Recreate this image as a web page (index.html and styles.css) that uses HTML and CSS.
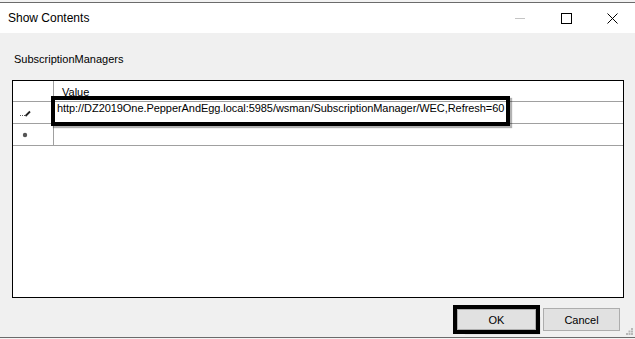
FILE: index.html
```html
<!DOCTYPE html>
<html lang="en">
<head>
    <meta charset="UTF-8">
    <meta name="viewport" content="width=device-width, initial-scale=1.0">
    <link rel="stylesheet" href="styles.css">
</head>
<body>
    <div class="window">
        <div class="top-edge"></div>

        <div class="titlebar">
            <span class="title">Show Contents</span>
            <div class="controls">
                <span class="ctl">
                    <svg width="10" height="10" viewBox="0 0 10 10"><line x1="0" y1="5.5" x2="10" y2="5.5" stroke="#c4c4c4" stroke-width="1"/></svg>
                </span>
                <span class="ctl">
                    <svg width="11" height="11" viewBox="0 0 11 11"><rect x="0.5" y="0.5" width="10" height="10" fill="none" stroke="#000" stroke-width="1"/></svg>
                </span>
                <span class="ctl">
                    <svg width="11" height="11" viewBox="0 0 11 11"><path d="M0.5 0.5 L10.5 10.5 M10.5 0.5 L0.5 10.5" stroke="#000" stroke-width="1"/></svg>
                </span>
            </div>
        </div>

        <div class="body">
            <div class="label">SubscriptionManagers</div>

            <div class="grid">
                <div class="grid-row header">
                    <div class="row-head"></div>
                    <div class="cell head-cell">Value</div>
                </div>
                <div class="grid-row">
                    <div class="row-head">
                        <svg class="pencil" width="12" height="8" viewBox="0 0 12 8">
                            <rect x="1" y="6" width="1" height="1" fill="#555"/>
                            <rect x="3" y="6" width="1" height="1" fill="#555"/>
                            <rect x="5" y="6" width="1" height="1" fill="#555"/>
                            <path d="M6.5 7 L11 2.5" stroke="#222" stroke-width="1.8"/>
                        </svg>
                    </div>
                    <div class="cell value-cell">http://DZ2019One.PepperAndEgg.local:5985/wsman/SubscriptionManager/WEC,Refresh=60</div>
                </div>
                <div class="grid-row">
                    <div class="row-head">
                        <svg class="star" width="6" height="6" viewBox="0 0 6 6">
                            <circle cx="3" cy="3" r="2.2" fill="#555"/>
                        </svg>
                    </div>
                    <div class="cell"></div>
                </div>

                <div class="highlight cell-mark"></div>
            </div>

            <div class="buttons">
                <button class="btn ok">OK</button>
                <button class="btn cancel">Cancel</button>
            </div>

            <svg class="grip" width="7" height="7" viewBox="0 0 7 7">
                <rect x="5" y="0" width="2" height="2" fill="#b8b8b8"/>
                <rect x="2.5" y="2.5" width="2" height="2" fill="#b8b8b8"/>
                <rect x="5" y="2.5" width="2" height="2" fill="#b8b8b8"/>
                <rect x="0" y="5" width="2" height="2" fill="#b8b8b8"/>
                <rect x="2.5" y="5" width="2" height="2" fill="#b8b8b8"/>
                <rect x="5" y="5" width="2" height="2" fill="#b8b8b8"/>
            </svg>
        </div>

        <div class="bottom-edge"></div>
    </div>
</body>
</html>
```

FILE: styles.css
```css
html, body {
    margin: 0;
    padding: 0;
}
body {
    width: 635px;
    height: 339px;
    overflow: hidden;
    background: #f0f0f0;
    font-family: 'Liberation Sans', Arial, sans-serif;
    font-size: 11px;
    color: #000;
}
.window {
    display: flex;
    flex-direction: column;
    height: 339px;
}
.top-edge {
    height: 2px;
    background: #f2f2f2;
    border-bottom: 1px solid #6b6b6b;
}
.titlebar {
    height: 30px;
    background: #fff;
    display: flex;
    align-items: center;
    justify-content: space-between;
}
.title {
    padding-left: 8px;
    font-size: 12px;
}
.controls {
    display: flex;
    height: 30px;
}
.ctl {
    width: 46px;
    display: flex;
    align-items: center;
    justify-content: center;
}
.body {
    position: relative;
    flex: 1;
    background: #f0f0f0;
    padding: 20px 0 6px 0;
}
.label {
    height: 13px;
    line-height: 13px;
    padding-left: 14px;
}
.grid {
    position: relative;
    box-sizing: border-box;
    margin: 14px 0 0 12px;
    width: 612px;
    height: 218px;
    border: 1px solid #000;
    background: #fff;
}
.grid-row {
    display: flex;
    box-sizing: border-box;
    height: 22px;
    border-bottom: 1px solid #a0a0a0;
}
.grid-row.header {
    height: 21px;
}
.row-head {
    box-sizing: border-box;
    width: 41px;
    border-right: 1px solid #a0a0a0;
    display: flex;
    align-items: flex-start;
}
.pencil {
    margin: 7px 0 0 6px;
}
.star {
    margin: 8px 0 0 9px;
}
.cell {
    flex: 1;
    line-height: 13px;
    padding-left: 3px;
    white-space: nowrap;
    overflow: hidden;
}
.value-cell {
    letter-spacing: -0.06px;
}
.head-cell {
    padding: 5px 0 0 8px;
}
.highlight {
    position: absolute;
    box-sizing: border-box;
    border: 4px solid #000;
    box-shadow: 2px 2px 1px rgba(0, 0, 0, 0.3);
}
.cell-mark {
    left: 38px;
    top: 15px;
    width: 459px;
    height: 30px;
}
.buttons {
    display: flex;
    align-items: center;
    margin-top: 10px;
    height: 23px;
    padding-left: 457px;
}
.btn {
    box-sizing: border-box;
    font-family: 'Liberation Sans', Arial, sans-serif;
    font-size: 11px;
    background: #e1e1e1;
    border: 1px solid #adadad;
    padding: 0;
    margin: 0;
    color: #000;
}
.ok {
    width: 79px;
    height: 21px;
    outline: 4px solid #000;
    box-shadow: 6px 6px 1px -2px rgba(0, 0, 0, 0.25);
    margin-right: 7px;
}
.cancel {
    width: 77px;
    height: 23px;
}
.grip {
    position: absolute;
    right: 2px;
    bottom: 2px;
}
.bottom-edge {
    height: 1px;
    background: #f4f4f4;
    border-top: 1px solid #6b6b6b;
}
```
